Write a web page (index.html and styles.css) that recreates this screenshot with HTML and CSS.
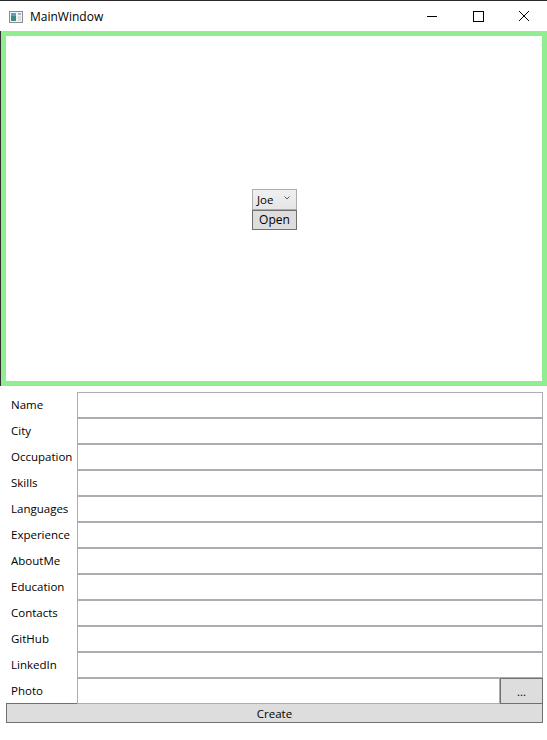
FILE: index.html
```html
<!DOCTYPE html>
<html>
<head>
<meta charset="utf-8">
<link rel="stylesheet" href="styles.css">
</head>
<body>
<div class="window">
  <div class="titlebar">
    <svg class="app-icon" width="14" height="12" viewBox="0 0 14 12">
      <rect x="0.5" y="0.5" width="13" height="11" fill="#f4f4f4" stroke="#8c8c8c"/>
      <rect x="2" y="2" width="5" height="8" fill="#3a8a8a"/>
      <rect x="2" y="2" width="5" height="3" fill="#5a9fd0"/>
      <rect x="9" y="2" width="3" height="2" fill="#9ab8c8"/>
      <rect x="9" y="5" width="3" height="5" fill="#d8e0e4"/>
    </svg>
    <span class="title">MainWindow</span>
    <div class="controls">
      <div class="ctl"><svg width="12" height="12" viewBox="0 0 12 12"><line x1="1" y1="6.5" x2="11" y2="6.5" stroke="#000" stroke-width="1"/></svg></div>
      <div class="ctl"><svg width="12" height="12" viewBox="0 0 12 12"><rect x="1.5" y="1.5" width="10" height="10" fill="none" stroke="#000" stroke-width="1"/></svg></div>
      <div class="ctl"><svg width="12" height="12" viewBox="0 0 12 12"><path d="M1 1 L11 11 M11 1 L1 11" stroke="#000" stroke-width="1"/></svg></div>
    </div>
  </div>
  <div class="canvas-edge">
    <div class="canvas">
      <div class="picker">
        <div class="combo"><span>Joe</span><svg class="chev" width="6" height="4" viewBox="0 0 6 4"><polyline points="0.5,0.5 3,3 5.5,0.5" fill="none" stroke="#606060" stroke-width="1"/></svg></div>
        <button class="btn open">Open</button>
      </div>
    </div>
  </div>
  <div class="form">
    <label>Name</label><div class="tb"></div>
    <label>City</label><div class="tb"></div>
    <label>Occupation</label><div class="tb"></div>
    <label>Skills</label><div class="tb"></div>
    <label>Languages</label><div class="tb"></div>
    <label>Experience</label><div class="tb"></div>
    <label>AboutMe</label><div class="tb"></div>
    <label>Education</label><div class="tb"></div>
    <label>Contacts</label><div class="tb"></div>
    <label>GitHub</label><div class="tb"></div>
    <label>LinkedIn</label><div class="tb"></div>
    <label>Photo</label><div class="photo-row"><div class="tb"></div><button class="btn browse">...</button></div>
  </div>
  <button class="btn create">Create</button>
</div>
</body>
</html>
```
FILE: styles.css
```css
html, body {
  margin: 0;
  padding: 0;
  background: #ffffff;
}
body {
  width: 547px;
  height: 740px;
  overflow: hidden;
  font-family: "Open Sans", "Noto Sans", sans-serif;
  font-size: 11.5px;
  color: #000;
}
.window {
  border-top: 1px solid #2b2b2b;
}
.titlebar {
  height: 30px;
  display: flex;
  align-items: center;
  background: #fff;
}
.app-icon {
  margin-left: 9px;
  margin-top: 1px;
}
.title {
  margin-left: 7px;
  font-size: 12px;
  color: #000;
}
.controls {
  margin-left: auto;
  display: flex;
  height: 30px;
}
.ctl {
  width: 46px;
  height: 30px;
  display: flex;
  align-items: center;
  justify-content: center;
}
.canvas-edge {
  border-left: 1px solid #303030;
}
.canvas {
  height: 345px;
  border: 5px solid #90ee90;
  display: flex;
  align-items: center;
  justify-content: center;
  padding-left: 1px;
}
.picker {
  display: flex;
  flex-direction: column;
  width: 45px;
  margin-top: 1px;
}
.combo {
  height: 21px;
  box-sizing: border-box;
  border: 1px solid #acacac;
  background: linear-gradient(#f0f0f0, #e5e5e5);
  display: flex;
  align-items: center;
  padding-left: 4px;
  padding-right: 6px;
  justify-content: space-between;
}
.chev {
  margin-top: -3px;
}
.btn {
  font-family: "Open Sans", "Noto Sans", sans-serif;
  font-size: 11.5px;
  color: #000;
  background: #dddddd;
  border: 1px solid #707070;
  padding: 0;
  margin: 0;
  box-sizing: border-box;
}
.open {
  height: 20px;
  width: 45px;
  font-size: 12px;
}
.form {
  display: grid;
  grid-template-columns: 71px 1fr;
  grid-auto-rows: 26px;
  padding: 6px 4px 0 6px;
}
.form label {
  display: flex;
  align-items: center;
  padding-left: 5px;
  padding-bottom: 1px;
  white-space: nowrap;
}
.tb {
  border: 1px solid #abadb3;
  box-sizing: border-box;
  height: 26px;
  background: #fff;
}
.photo-row {
  display: flex;
}
.photo-row .tb {
  flex: 1;
}
.browse {
  width: 43px;
  height: 26px;
}
.create {
  display: block;
  margin: -1px 4px 0 6px;
  width: 537px;
  height: 20px;
}
```
